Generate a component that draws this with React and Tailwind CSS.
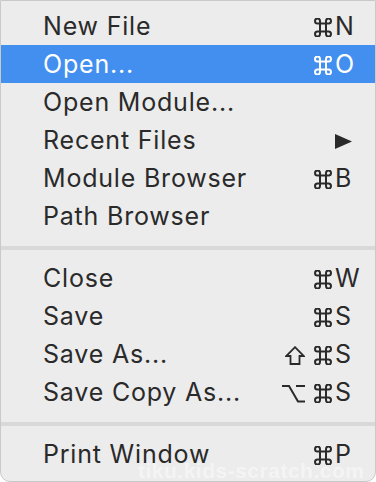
import React from "react";

function Row({ label, mods = null, k = "", arrow = false, active = false }) {
  return (
    <div
      className={
        "h-[38px] flex items-center pl-[42px] pr-[15px] pt-[2px] " +
        (active ? "bg-[#428ff0] text-white" : "text-[#2a2a2a]")
      }
    >
      <span className="flex-1 tracking-[0.8px]">{label}</span>
      {arrow ? (
        <svg width="17" height="15" viewBox="0 0 17 15" className="mr-[8px]">
          <polygon points="0,0 17,7.5 0,15" fill="#2a2a2a" />
        </svg>
      ) : (
        <div className="flex items-center">
          <span className="flex items-center gap-[8px]">{mods}</span>
          <span className="w-[25px] ml-[2px]">{k}</span>
        </div>
      )}
    </div>
  );
}

function Sep() {
  return (
    <div className="pt-[11px] pb-[9px]">
      <div className="h-[4px] bg-[#d9d9d9]" />
    </div>
  );
}

const Cmd = () => (
  <svg width="20" height="19" viewBox="0 0 20 19" fill="none" stroke="currentColor" strokeWidth="2">
    <path d="M7 5.5v8M13 5.5v8M7 5.5h6M7 13.5h6M7 5.5H4.5A2.5 2.5 0 1 1 7 3v2.5M13 5.5V3a2.5 2.5 0 1 1 2.5 2.5H13M13 13.5h2.5A2.5 2.5 0 1 1 13 16v-2.5M7 13.5V16a2.5 2.5 0 1 1-2.5-2.5H7" />
  </svg>
);
const Shift = () => (
  <svg width="20" height="19" viewBox="0 0 20 19" fill="none" stroke="currentColor" strokeWidth="1.8" strokeLinejoin="miter">
    <path d="M10 1.2 L18.8 10 H14.5 V18 H5.5 V10 H1.2 Z" />
  </svg>
);
const Opt = () => (
  <svg width="23" height="19" viewBox="0 0 23 19" fill="none" stroke="currentColor" strokeWidth="2">
    <path d="M0 2 H7 L16 17.5 H23 M14 2 H23" />
  </svg>
);

export default function App() {
  return (
    <div className="w-[376px] h-[482px] bg-white relative font-['Inter',sans-serif] text-[25px] overflow-hidden">
      <div className="h-full bg-[#ececec] border border-[#c9c9c9] rounded-b-[10px] pt-[6px] flex flex-col">
        <Row label="New File" mods={<Cmd />} k="N" />
        <Row label="Open..." mods={<Cmd />} k="O" active />
        <Row label="Open Module..." />
        <Row label="Recent Files" arrow />
        <Row label="Module Browser" mods={<Cmd />} k="B" />
        <Row label="Path Browser" />
        <Sep />
        <Row label="Close" mods={<Cmd />} k="W" />
        <Row label="Save" mods={<Cmd />} k="S" />
        <Row label="Save As..." mods={<><Shift /><Cmd /></>} k="S" />
        <Row label="Save Copy As..." mods={<><Opt /><Cmd /></>} k="S" />
        <Sep />
        <Row label="Print Window" mods={<Cmd />} k="P" />
      </div>
      <div className="absolute left-[138px] top-[455px] text-[21px] font-bold text-white/45 tracking-[0.5px] font-['Liberation_Sans',sans-serif]">
        tiku.kids-scratch.com
      </div>
    </div>
  );
}
